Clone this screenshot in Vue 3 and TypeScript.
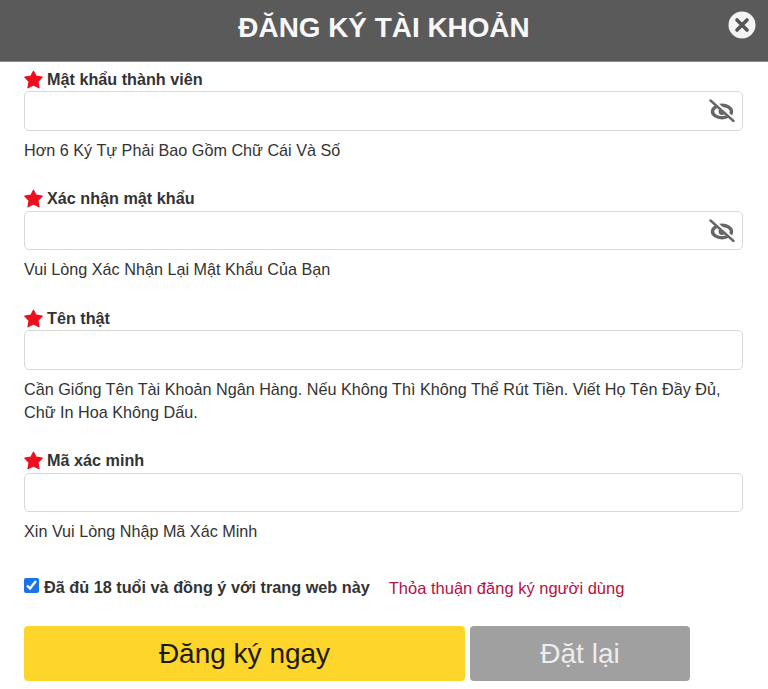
<script setup lang="ts">
interface Field {
  label: string
  hint: string
  eye: boolean
}

const fields: Field[] = [
  { label: 'Mật khẩu thành viên', hint: 'Hơn 6 Ký Tự Phải Bao Gồm Chữ Cái Và Số', eye: true },
  { label: 'Xác nhận mật khẩu', hint: 'Vui Lòng Xác Nhận Lại Mật Khẩu Của Bạn', eye: true },
  {
    label: 'Tên thật',
    hint: 'Cần Giống Tên Tài Khoản Ngân Hàng. Nếu Không Thì Không Thể Rút Tiền. Viết Họ Tên Đầy Đủ, Chữ In Hoa Không Dấu.',
    eye: false,
  },
  { label: 'Mã xác minh', hint: 'Xin Vui Lòng Nhập Mã Xác Minh', eye: false },
]
</script>

<template>
  <div class="page">
    <header class="head">
      <h1 class="title">ĐĂNG KÝ TÀI KHOẢN</h1>
      <button class="close" type="button" aria-label="Đóng">
        <svg viewBox="0 0 28 28" width="28" height="28">
          <circle cx="14" cy="14" r="13.5" fill="#f4f4f4" />
          <path d="M9 9 L19 19 M19 9 L9 19" stroke="#555" stroke-width="3.6" stroke-linecap="round" />
        </svg>
      </button>
    </header>

    <form class="form" @submit.prevent>
      <div v-for="f in fields" :key="f.label" class="field">
        <label class="label">
          <svg class="star" viewBox="0 0 24 24" width="19" height="19">
            <path
              d="M12 1.5 L15.4 7.8 L23 9 L17.6 14.6 L19 22.5 L12 18.8 L5 22.5 L6.4 14.6 L1 9 L8.6 7.8 Z"
              fill="#ee0f1e"
              stroke="#ee0f1e"
              stroke-width="1.5"
              stroke-linejoin="round"
            />
          </svg>
          <span>{{ f.label }}</span>
        </label>
        <div class="box">
          <svg v-if="f.eye" class="eye" viewBox="0 0 26 24" width="26" height="24">
            <ellipse cx="13" cy="13.5" rx="9.5" ry="6.2" fill="none" stroke="#666" stroke-width="3.4" />
            <circle cx="13" cy="13.5" r="3.4" fill="#666" />
            <path d="M3 2 L26 23" stroke="#fff" stroke-width="4" />
            <path d="M1.5 2.5 L24.5 23" stroke="#666" stroke-width="2.4" stroke-linecap="round" />
          </svg>
        </div>
        <p class="hint">{{ f.hint }}</p>
      </div>

      <div class="agree">
        <input id="agree" class="check" type="checkbox" checked />
        <label for="agree" class="agree-text">Đã đủ 18 tuổi và đồng ý với trang web này</label>
        <a class="terms" href="#" @click.prevent>Thỏa thuận đăng ký người dùng</a>
      </div>

      <div class="actions">
        <button class="btn primary" type="submit">Đăng ký ngay</button>
        <button class="btn reset" type="reset">Đặt lại</button>
      </div>
    </form>
  </div>
</template>

<style scoped>
.page {
  width: 768px;
  height: 689px;
  overflow: hidden;
  background: #fff;
  font-family: "Liberation Sans", Arial, sans-serif;
  color: #2b2b2b;
}

.head {
  position: relative;
  height: 61px;
  background: #5a5a5a;
  border-bottom: 1px solid #8a8a8a;
  display: flex;
  align-items: center;
  justify-content: center;
}

.title {
  margin: 0 0 5px;
  font-size: 27.9px;
  font-weight: 700;
  color: #f7f7f7;
}

.close {
  position: absolute;
  top: 11px;
  right: 12px;
  width: 28px;
  height: 28px;
  padding: 0;
  border: 0;
  background: none;
  display: block;
}

.close svg {
  display: block;
}

.form {
  padding: 7px 25px 0 24px;
}

.field {
  margin-bottom: 27px;
}

.label {
  display: flex;
  align-items: center;
  gap: 4px;
  height: 20px;
  margin-bottom: 2px;
  font-size: 16.2px;
  font-weight: 700;
  color: #333;
}

.star {
  flex: none;
}

.box {
  position: relative;
  height: 39.5px;
  box-sizing: border-box;
  border: 1.5px solid #d8d8d8;
  border-radius: 5px;
  background: #fff;
}

.eye {
  position: absolute;
  right: 7px;
  top: 6px;
}

.hint {
  margin: 8px 0 0;
  font-size: 16.2px;
  line-height: 23px;
  color: #333;
}

.agree {
  display: flex;
  align-items: center;
  height: 22px;
  margin-top: 33px;
}

.check {
  width: 15px;
  height: 15px;
  margin: 0 5px 3px 0;
  accent-color: #1a73e8;
}

.agree-text {
  font-size: 16.25px;
  font-weight: 700;
  color: #333;
}

.terms {
  margin-left: 19px;
  margin-top: 3px;
  font-size: 16.5px;
  color: #b5123f;
  text-decoration: none;
}

.actions {
  display: flex;
  gap: 5px;
  margin-top: 28px;
}

.btn {
  height: 55px;
  border: 0;
  border-radius: 4px;
  font-family: inherit;
  font-size: 28px;
}

.primary {
  width: 441px;
  background: #fdd52b;
  color: #1c1a10;
}

.reset {
  width: 220px;
  background: #a0a0a0;
  color: #ededed;
}
</style>
